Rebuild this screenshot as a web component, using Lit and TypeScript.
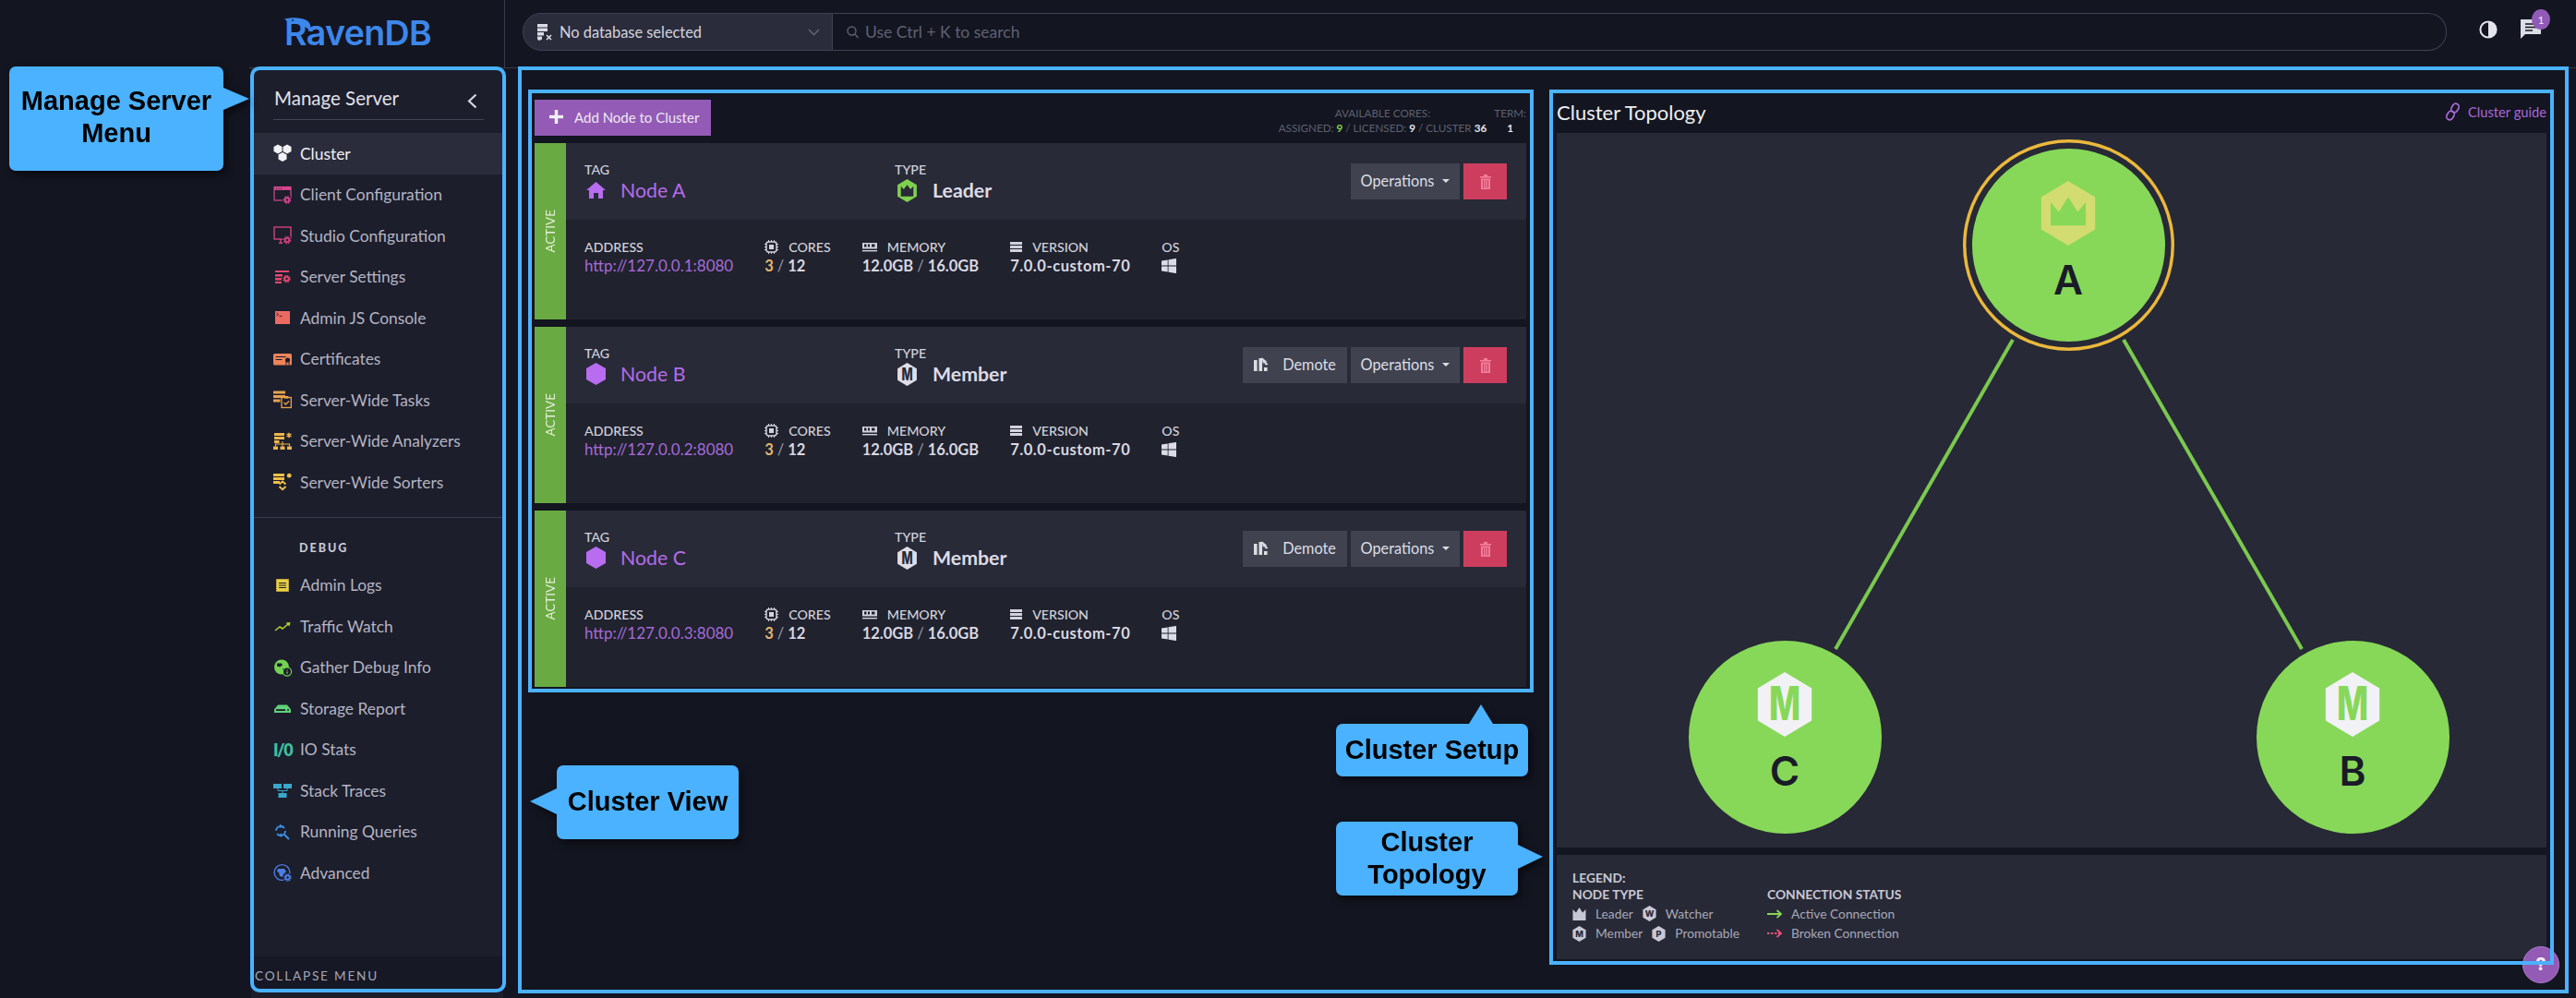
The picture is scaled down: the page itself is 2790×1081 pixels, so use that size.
import { LitElement, html, css, svg } from "lit";
import { customElement } from "lit/decorators.js";

const hexPts = (cx: number, cy: number, rx: number, ry: number) =>
  [[0, -1], [1, -0.5], [1, 0.5], [0, 1], [-1, 0.5], [-1, -0.5]]
    .map(([a, b]) => `${cx + a * rx},${cy + b * ry}`).join(" ");

const gear = (x: number, y: number, c: string, bg = "#1c1e2c") => svg`
  <circle cx=${x} cy=${y} r="5" fill=${bg}/>
  <circle cx=${x} cy=${y} r="2.1" fill="none" stroke=${c} stroke-width="1.7"/>
  <circle cx=${x} cy=${y} r="3.5" fill="none" stroke=${c} stroke-width="1.5" stroke-dasharray="1.7 1"/>`;

const star = (x: number, y: number, c: string) => svg`
  <path d="M${x} ${y - 2.8}V${y + 2.8}M${x - 2.5} ${y - 1.4}L${x + 2.5} ${y + 1.4}M${x - 2.5} ${y + 1.4}L${x + 2.5} ${y - 1.4}" stroke=${c} stroke-width="1.5"/>`;

const icons: Record<string, any> = {
  cluster: svg`<g fill="#f2f2f6"><polygon points=${hexPts(5, 5.5, 4.5, 5)}/><polygon points=${hexPts(15, 5.5, 4.5, 5)}/><polygon points=${hexPts(10, 14, 4.5, 5)}/></g>`,
  client: svg`<rect x="1" y="1.5" width="18" height="14.5" fill="none" stroke="#d8478e" stroke-width="1.2"/><rect x="1" y="1.5" width="18" height="3.4" fill="#d8478e"/><path d="M3 3.2h1M5.5 3.2h1M8 3.2h1" stroke="#1c1e2c" stroke-width="1"/>${gear(15, 15.5, "#d8478e")}`,
  studio: svg`<rect x="1" y="1" width="18" height="13" fill="none" stroke="#d4407f" stroke-width="1.4"/><path d="M8 14v4M6 18.2h4" stroke="#d4407f" stroke-width="1.4"/>${gear(15, 15, "#d4407f")}`,
  settings: svg`<g fill="#e2496f"><rect x="2" y="3" width="15" height="2"/><rect x="2" y="7" width="8" height="2.6"/><rect x="2" y="11" width="7" height="2.6"/><rect x="2" y="15" width="7" height="2"/></g>${gear(14.5, 12, "#e2496f")}`,
  console: svg`<rect x="2" y="3" width="16" height="14" fill="#ea6a62"/><path d="M3.5 5l2 1.6-2 1.6M6.5 8.4h3" fill="none" stroke="#2a1c28" stroke-width=".9"/>`,
  cert: svg`<rect x="0" y="4" width="20" height="12.5" rx="1.6" fill="#ef8458"/><path d="M2.5 7.5h11M2.5 10.5h7" stroke="#1c1e2c" stroke-width="1"/><circle cx="15.5" cy="11" r="2.6" fill="#1c1e2c"/><path d="M14 13v3.5M17 13v3.5" stroke="#1c1e2c" stroke-width="1"/>`,
  tasks: svg`<g fill="#eaa24e"><rect x="0" y="0.5" width="13" height="3"/><rect x="0" y="5" width="13" height="3"/><rect x="0" y="9.5" width="7.5" height="3"/></g><rect x="9" y="7.5" width="10.3" height="11" fill="#1c1e2c" stroke="#eaa24e" stroke-width="1.3"/><rect x="11.8" y="6" width="4.6" height="2.6" fill="#eaa24e"/><path d="M11.5 13l2 2 3.5-3.5" fill="none" stroke="#eaa24e" stroke-width="1.3"/>`,
  analyzers: svg`<g fill="#efb54c"><rect x="1" y="1" width="11" height="3"/><rect x="1" y="5" width="11" height="3"/><rect x="1" y="9" width="5.5" height="3"/><rect x="0" y="15.5" width="5" height="3.5"/><rect x="7.5" y="15.5" width="5" height="3.5"/><rect x="15" y="15.5" width="5" height="3.5"/></g><path d="M10 10v3M2.5 15.5v-2.5h15v2.5M10 13v2.5" fill="none" stroke="#efb54c" stroke-width="1.1"/>${star(17, 3.5, "#efb54c")}`,
  sorters: svg`<g fill="#efc044"><rect x="0" y="1" width="12" height="3"/><rect x="0" y="5" width="12" height="3"/><rect x="0" y="9" width="7" height="3"/><circle cx="17.2" cy="3.2" r="2.4"/></g><path d="M6.5 12.5l3.5-3 3.5 3M6.5 15l3.5 3.2 3.5-3.2" fill="none" stroke="#efc044" stroke-width="2"/>`,
  logs: svg`<rect x="3.5" y="3.5" width="13" height="13" fill="#e8cf45" stroke="#e8cf45" stroke-dasharray="1 .8"/><path d="M6 7.5h8M6 10h8M6 12.5h8" stroke="#1c1e2c" stroke-width="1.2"/>`,
  traffic: svg`<path d="M2 15l5-4 3 2 6-5" fill="none" stroke="#b3cf2f" stroke-width="1.6"/><path d="M13.5 6.5l5-.5-1 4.5z" fill="#b3cf2f"/>`,
  gather: svg`<circle cx="9" cy="9.5" r="8" fill="#74d253"/><path d="M4 5.5h5l1 2-3 2-3-1zM10 11h4l-2 4-2-1z" fill="#1c1e2c"/><circle cx="15" cy="14.5" r="4.6" fill="#1c1e2c" stroke="#74d253" stroke-width="1.2"/><path d="M15 12.5v.9M15 14.5v2.3" stroke="#74d253" stroke-width="1.3"/>`,
  storage: svg`<path d="M1 15v-3.5l4-5h10l4 5V15z" fill="#5fd27a"/><rect x="3" y="11.2" width="10" height="1.8" fill="#1c1e2c"/><circle cx="16" cy="12" r="1" fill="#1c1e2c"/>`,
  stack: svg`<g fill="#38a8cc"><rect x="0" y="3" width="9" height="5"/><rect x="11" y="3" width="9" height="5"/><rect x="5.5" y="13" width="9" height="5"/></g><path d="M5 8v2.5h10V8M10 10.5V13" fill="none" stroke="#38a8cc" stroke-width="1"/>`,
  running: svg`<circle cx="8" cy="9" r="5" fill="none" stroke="#3a90e6" stroke-width="1.9" stroke-dasharray="12 3.5"/><path d="M7 1.5l3.4 2.5L7 6zM9 16l-3.4-2.5L9 11.5z" fill="#3a90e6"/><path d="M12 13l5 5" stroke="#3a90e6" stroke-width="1.9"/>`,
  advanced: svg`<circle cx="9.5" cy="10" r="8.4" fill="none" stroke="#4c7ee2" stroke-width="1.4"/><path d="M5 6h7l2 3-3 3-1 3-3-1-1-4-2-1z" fill="#4c7ee2"/>${gear(15.5, 15.5, "#4c7ee2")}`,
};

const hexIcon = (w: number, h: number, bg: string, inner: any) => html`<svg class="hexi" width=${w} height=${h} viewBox="-10 -12 20 24">
  <polygon points=${hexPts(0, 0, 10, 12)} fill=${bg}/>${inner}</svg>`;

const mText = (fill: string) => svg`<text x="0" y="5.3" transform="scale(.8 1.12)" text-anchor="middle" font-size="15.5" font-weight="800" fill=${fill} font-family="Inter, sans-serif">M</text>`;

const leaderHex = hexIcon(23, 25, "#7ed04d", svg`<polygon points="-6.5,6 -6.5,-4.5 -3.5,-1.4 0,-6 3.5,-1.4 6.5,-4.5 6.5,6" fill="#282a38"/>`);
const memberHex = hexIcon(23, 25, "#dedee8", mText("#282a38"));

const SECTIONS = {
  main: [
    ["cluster", "Cluster", true], ["client", "Client Configuration"], ["studio", "Studio Configuration"],
    ["settings", "Server Settings"], ["console", "Admin JS Console"], ["cert", "Certificates"],
    ["tasks", "Server-Wide Tasks"], ["analyzers", "Server-Wide Analyzers"], ["sorters", "Server-Wide Sorters"],
  ],
  debug: [
    ["logs", "Admin Logs"], ["traffic", "Traffic Watch"], ["gather", "Gather Debug Info"], ["storage", "Storage Report"],
    ["io", "IO Stats"], ["stack", "Stack Traces"], ["running", "Running Queries"], ["advanced", "Advanced"],
  ],
};

const NODES = [
  { tag: "A", addr: "http://127.0.0.1:8080", type: "Leader", demote: false },
  { tag: "B", addr: "http://127.0.0.2:8080", type: "Member", demote: true },
  { tag: "C", addr: "http://127.0.0.3:8080", type: "Member", demote: true },
];

const GRAPH = [
  { tag: "A", x: 554, y: 121.5, leader: true },
  { tag: "C", x: 247, y: 654, leader: false },
  { tag: "B", x: 862, y: 654, leader: false },
];

@customElement("app-root")
export class AppRoot extends LitElement {
  static styles = css`
    :host { display: block; position: relative; width: 2790px; height: 1081px; overflow: hidden; background: #131520; color: #d8d8e4; font-family: Lato, "Noto Sans", sans-serif; }
    * { box-sizing: border-box; }
    svg { display: block; flex: none; overflow: visible; }
    .shell { display: grid; grid-template-columns: 270px 277px 1fr; grid-template-rows: 74px 1fr; height: 100%; }
    .logo { grid-column: 2; border-bottom: 1px solid #383a4a; border-right: 1px solid #383a4a; padding: 17px 0 0 38px; position: relative; }
    .logotext { font: 600 37.5px/38px Inter, sans-serif; color: #3d87ea; letter-spacing: -.6px; }
    .beak { position: absolute; left: 38px; top: 19px; }
    .top { grid-column: 3; border-bottom: 1px solid #383a4a; display: flex; align-items: flex-start; padding: 14px 0 0 19px; }
    .db { width: 336px; height: 41px; background: #2a2c3c; border: 1px solid #3f4152; border-radius: 20px 0 0 20px; display: flex; align-items: center; padding-left: 14px; gap: 7px; font-size: 16.4px; color: #d4d4de; }
    .db .chev { margin-left: auto; margin-right: 13px; }
    .search { width: 1748px; height: 41px; border: 1px solid #3f4152; border-left: 0; border-radius: 0 20px 20px 0; display: flex; align-items: center; gap: 7px; padding-left: 15px; font-size: 17.5px; color: #5f6172; }
    .ticons { display: flex; align-items: center; gap: 25px; margin: 7px 0 0 35px; position: relative; }
    .badge { position: absolute; right: -10px; top: -11px; width: 20px; height: 22px; border-radius: 50%; background: #9159b8; color: #eee; font-size: 12px; display: flex; align-items: center; justify-content: center; }
    .side { grid-column: 2; margin-left: 2px; background: #1c1e2c; border-right: 2px solid #131520; display: flex; flex-direction: column; }
    .shead { height: 56px; margin: 0 21px 0 24px; border-bottom: 1px solid #42445a; display: flex; align-items: center; justify-content: space-between; font-size: 20.5px; color: #e2e2ea; padding: 8px 7px 0 1px; }
    .shead svg { margin-top: 8px; }
    .menu { margin-top: 14px; }
    .item { height: 44.5px; display: flex; align-items: center; padding-left: 24px; gap: 9px; font-size: 17.4px; color: #b4b4c2; }
    .item.on { background: #2a2c3c; color: #f0f0f4; }
    .item .ic { width: 20px; height: 20px; flex: none; }
    .iotxt { width: 20px; font-weight: 800; font-size: 18px; color: #3fbf9f; letter-spacing: -1.5px; text-align: center; line-height: 20px; }
    .sep { border-top: 1px solid #3a3c4e; margin-top: 15.5px; }
    .dbg { height: 50.5px; padding: 25px 0 0 52px; font-size: 12.5px; font-weight: 900; letter-spacing: 2px; color: #c8c8d4; }
    .collapse { margin-top: auto; height: 37px; background: #161825; padding: 13px 0 0 4px; font-size: 13.6px; letter-spacing: 1.8px; color: #a6a6b4; white-space: nowrap; margin-bottom: 8px; }
    .main { grid-column: 3; display: flex; gap: 33px; padding: 34px 32px 0; }
    .setup { width: 1074px; display: flex; flex-direction: column; gap: 8px; }
    .shdr { height: 39px; display: flex; justify-content: space-between; }
    .add { width: 191px; background: #935bb5; color: #f0e8f4; display: flex; align-items: center; gap: 12px; padding: 0 0 2px 16px; font-size: 15px; white-space: nowrap; }
    .stats { display: flex; gap: 8px; font-size: 11.7px; line-height: 16px; color: #5e6070; text-align: center; padding-top: 6px; }
    .stats b { color: #e6e6ee; font-weight: 700; }
    .stats b.g { color: #85d555; }
    .card { height: 191px; display: flex; }
    .state { width: 34px; background: #6aaa42; display: flex; align-items: center; justify-content: center; }
    .state span { writing-mode: vertical-rl; transform: rotate(180deg); font-size: 13.5px; color: #e4eed8; }
    .body { flex: 1; display: flex; flex-direction: column; }
    .upper { height: 83px; background: #282a38; display: flex; padding: 20px 21px 0 20px; position: relative; }
    .lower { flex: 1; background: #20222e; display: flex; gap: 34px; padding: 21px 0 0 20px; }
    .tagc { width: 336px; }
    .lbl { font-size: 14.2px; line-height: 17px; color: #d2d2dc; font-weight: 500; white-space: nowrap; display: flex; align-items: center; gap: 11px; }
    .val { display: flex; align-items: center; gap: 16px; height: 28px; font-size: 21.3px; padding-left: 2px; }
    .val.name { color: #b46ce8; }
    .val.kind { color: #dcdce6; font-weight: 700; }
    .sub { height: 25px; margin-top: -1px; display: flex; align-items: center; font-size: 16.5px; font-weight: 700; color: #d8d8e2; white-space: nowrap; }
    .sub.link { color: #a56ad8; font-weight: 400; font-size: 17px; }
    .sub.ver { letter-spacing: .55px; }
    .sub i { font-style: normal; color: #e6b46c; }
    .sub em { font-style: normal; font-weight: 400; color: #9a9aa8; margin: 0 4px; }
    .acts { margin-left: auto; margin-top: 2px; display: flex; gap: 4px; height: 39px; }
    .btn { height: 39px; padding-bottom: 2px; background: #40424f; color: #dcdce4; font-size: 16.3px; display: flex; align-items: center; justify-content: center; gap: 9px; }
    .btn.ops { width: 118px; }
    .btn.dem { width: 113px; gap: 15px; }
    .btn.del { width: 47px; background: #cd3e5e; padding-bottom: 0; }
    .caret { width: 0; height: 0; border: 4px solid transparent; border-top: 4.5px solid #dcdce4; border-bottom: 0; }
    .topo { flex: 1; display: flex; flex-direction: column; }
    .thdr { height: 36px; padding-bottom: 10px; display: flex; align-items: center; justify-content: space-between; font-size: 22px; color: #eeeef2; }
    .guide { display: flex; align-items: center; gap: 9px; font-size: 14.7px; color: #a968d8; }
    .canvas { height: 774px; background: #272936; position: relative; }
    .lines { position: absolute; inset: 0; }
    .node { position: absolute; width: 209px; height: 209px; margin: -104.5px 0 0 -104.5px; border-radius: 50%; background: #87d858; display: flex; flex-direction: column; align-items: center; padding-top: 34.5px; }
    .node.lead { box-shadow: 0 0 0 6.5px #272936, 0 0 0 10px #eab83c; }
    .letter { margin-top: 9px; font: 600 44px/56px Inter, sans-serif; color: #1a1b28; }
    .legend { margin-top: 8px; height: 113px; background: #272936; padding: 16px 0 0 17px; font-size: 13.8px; line-height: 18px; color: #a8a8b8; display: flex; flex-direction: column; }
    .legend h4 { margin: 0; font-size: 13.8px; font-weight: 700; color: #c8c8d4; }
    .lcols { display: flex; gap: 34px; }
    .lcol.types { width: 177px; }
    .lcol h4 { margin-bottom: 1px; }
    .lrow { display: flex; align-items: center; height: 21.5px; gap: 10px; white-space: nowrap; }
    .help { position: absolute; left: 2732px; top: 1025px; width: 40px; height: 40px; border-radius: 50%; background: #935bb5; border: 1px solid #b07ad0; color: #f4ecf8; font: 800 19px/38px Inter, sans-serif; text-align: center; }
    .frame { position: absolute; border: 4px solid #4ab2ff; pointer-events: none; }
    .f-menu { left: 271px; top: 72px; width: 277px; height: 1003px; border-radius: 10px; }
    .f-main { left: 561px; top: 72px; width: 2221px; height: 1004px; }
    .f-setup { left: 572px; top: 97px; width: 1089px; height: 653px; }
    .f-topo { left: 1678px; top: 97px; width: 1088px; height: 948px; }
    .call { position: absolute; background: #4ab2ff; color: #000; border-radius: 7px; font: 700 29px/35px "Liberation Sans", Arial, sans-serif; text-align: center; filter: drop-shadow(3px 4px 4px rgba(0,0,0,.55)); }
    .call::after { content: ""; position: absolute; width: 0; height: 0; border: solid transparent; }
    .c-menu { left: 10px; top: 72px; width: 232px; height: 113px; padding-top: 20px; }
    .c-menu::after { left: 100%; top: 23px; border-width: 12.5px 0 12.5px 28px; border-left-color: #4ab2ff; }
    .c-view { left: 603px; top: 829px; width: 197px; height: 80px; padding-top: 22px; }
    .c-view::after { right: 100%; top: 25px; border-width: 14px 29px 14px 0; border-right-color: #4ab2ff; }
    .c-setup { left: 1447px; top: 784px; width: 208px; height: 57px; padding-top: 11px; }
    .c-setup::after { left: 144px; bottom: 100%; border-width: 0 13px 21px; border-bottom-color: #4ab2ff; }
    .c-topo { left: 1447px; top: 890px; width: 197px; height: 80px; padding-top: 5px; }
    .c-topo::after { left: 100%; top: 25px; border-width: 13px 0 13px 27px; border-left-color: #4ab2ff; }
  `;

  private menuItem(m: any[]) {
    const [k, label, on] = m;
    return html`<div class="item ${on ? "on" : ""}">
      ${k === "io" ? html`<span class="iotxt">I/0</span>` : html`<svg class="ic" viewBox="0 0 20 20">${icons[k]}</svg>`}
      <span>${label}</span></div>`;
  }

  private card(n: typeof NODES[number]) {
    const lead = n.tag === "A";
    return html`<div class="card">
      <div class="state"><span>ACTIVE</span></div>
      <div class="body">
        <div class="upper">
          <div class="tagc">
            <div class="lbl">TAG</div>
            <div class="val name">
              ${lead
                ? html`<svg width="21" height="18" viewBox="0 0 21 18"><path d="M10.5 0L21 9h-3v9h-5v-6H8v6H3V9H0z" fill="#b86cf0"/></svg>`
                : html`<svg width="21" height="24" viewBox="0 0 21 24"><polygon points=${hexPts(10.5, 12, 10.5, 12)} fill="#b86cf0"/></svg>`}
              <span>Node ${n.tag}</span>
            </div>
          </div>
          <div>
            <div class="lbl">TYPE</div>
            <div class="val kind">${lead ? leaderHex : memberHex}<span>${n.type}</span></div>
          </div>
          <div class="acts">
            ${n.demote ? html`<div class="btn dem">
              <svg width="16" height="15" viewBox="0 0 16 15" fill="#dcdce4"><rect x="0" y="3" width="3.6" height="12"/><rect x="5.5" y="1" width="3.6" height="14"/><rect x="11" y="11" width="3.6" height="4"/><path d="M8.5 0l6 5-1.6-.2 2.6 3L13 8.5 10.8 5.6 10 7z"/></svg>
              <span>Demote</span></div>` : ""}
            <div class="btn ops"><span>Operations</span><span class="caret"></span></div>
            <div class="btn del"><svg width="12" height="16" viewBox="0 0 12 16" fill="#f27f9a"><rect x="0" y="2" width="12" height="1.6"/><rect x="4" y="0" width="4" height="2"/><path d="M1 4.5h10V16H1zM3 6v8.5h1V6zM5.5 6v8.5h1V6zM8 6v8.5h1V6z" fill-rule="evenodd"/></svg></div>
          </div>
        </div>
        <div class="lower">
          <div><div class="lbl">ADDRESS</div><div class="sub link">${n.addr}</div></div>
          <div><div class="lbl">
            <svg width="15" height="15" viewBox="0 0 15 15" fill="none" stroke="#d2d2dc"><rect x="2" y="2" width="11" height="11" rx="2.4" stroke-width="1.5"/><rect x="5" y="5" width="5" height="5" fill="#d2d2dc" stroke="none"/><path d="M4.5 0v2M7.5 0v2M10.5 0v2M4.5 13v2M7.5 13v2M10.5 13v2M0 4.5h2M0 7.5h2M0 10.5h2M13 4.5h2M13 7.5h2M13 10.5h2"/></svg>
            CORES</div><div class="sub"><i>3</i><em>/</em>12</div></div>
          <div><div class="lbl">
            <svg width="16" height="10" viewBox="0 0 16 10" fill="#d2d2dc"><path d="M0 0h16v6.5H0zM2 1.5v3h2.5v-3zM6 1.5v3h2v-3zM10 1.5v3h3.5v-3z" fill-rule="evenodd"/><rect x="0" y="8" width="16" height="1.4"/></svg>
            MEMORY</div><div class="sub">12.0GB<em>/</em>16.0GB</div></div>
          <div><div class="lbl">
            <svg width="13" height="11" viewBox="0 0 13 11" fill="#d2d2dc"><rect width="13" height="3"/><rect y="4" width="13" height="3"/><rect y="8" width="13" height="3"/></svg>
            VERSION</div><div class="sub ver">7.0.0-custom-70</div></div>
          <div><div class="lbl">OS</div><div class="sub"><svg width="16" height="16" viewBox="0 0 16 16" fill="#dcdce6"><path d="M0 2.4L6.7 1.4V7.6H0zM7.5 1.3L16 0V7.6H7.5zM0 8.4H6.7V14.6L0 13.6zM7.5 8.4H16V16L7.5 14.7z"/></svg></div></div>
        </div>
      </div>
    </div>`;
  }

  private legendHex(letter: string) {
    return hexIcon(15, 17, "#c8c8d4", svg`<text x="0" y="5" text-anchor="middle" font-size="13" font-weight="800" fill="#272936" font-family="Inter, sans-serif">${letter}</text>`);
  }

  render() {
    return html`
      <div class="shell">
        <div class="logo">
          <span class="logotext">RavenDB</span>
          <svg class="beak" width="30" height="16" viewBox="0 0 30 16"><path d="M0 1.5C8-.5 18-.5 24 3c4 2.5 5 6 4 11L21 9C17 6 9 4.5 4 5z" fill="#3d87ea"/><circle cx="9" cy="3" r=".9" fill="#131520"/></svg>
        </div>
        <div class="top">
          <div class="db">
            <svg width="18" height="18" viewBox="0 0 18 18" fill="#dcdce6"><path d="M1 0h11v3.5H1zM1 4.5h11V8H1zM1 9h7v3.5H1zM1 13.5h5v3L3 18l-2-1.5z"/><path d="M11 12l5 5M16 12l-5 5" stroke="#dcdce6" stroke-width="1.6"/></svg>
            <span>No database selected</span>
            <svg class="chev" width="13" height="8" viewBox="0 0 13 8" fill="none" stroke="#5f6172" stroke-width="1.6"><path d="M1 1l5.5 5.5L12 1"/></svg>
          </div>
          <div class="search">
            <svg width="13" height="14" viewBox="0 0 13 14" fill="none" stroke="#5f6172" stroke-width="1.4"><circle cx="5.5" cy="5.5" r="4.5"/><path d="M9 9l3.5 4"/></svg>
            <span>Use Ctrl + K to search</span>
          </div>
          <div class="ticons">
            <svg width="20" height="20" viewBox="0 0 20 20"><circle cx="10" cy="10" r="8.6" fill="none" stroke="#e4e4ec" stroke-width="2"/><path d="M10 1.4a8.6 8.6 0 0 1 0 17.2z" fill="#e4e4ec"/></svg>
            <svg width="22" height="22" viewBox="0 0 22 22"><path d="M0 0h22v16H5l-5 5z" fill="#dcdce6"/><path d="M5 5h12M5 8.5h12M5 12h8" stroke="#131520" stroke-width="1.6"/></svg>
            <span class="badge">1</span>
          </div>
        </div>
        <aside class="side">
          <div class="shead"><span>Manage Server</span>
            <svg width="11" height="17" viewBox="0 0 11 17" fill="none" stroke="#d8d8e0" stroke-width="2.2"><path d="M9.5 1.5L2 8.5l7.5 7"/></svg>
          </div>
          <div class="menu">${SECTIONS.main.map((m) => this.menuItem(m))}</div>
          <div class="sep"></div>
          <div class="dbg">DEBUG</div>
          <div>${SECTIONS.debug.map((m) => this.menuItem(m))}</div>
          <div class="collapse">COLLAPSE MENU</div>
        </aside>
        <main class="main">
          <section class="setup">
            <div class="shdr">
              <div class="add">
                <svg width="15" height="15" viewBox="0 0 15 15" fill="#f4f0f6"><rect x="5.8" width="3.4" height="15"/><rect y="5.8" width="15" height="3.4"/></svg>
                <span>Add Node to Cluster</span>
              </div>
              <div class="stats">
                <div>AVAILABLE CORES:<br/>ASSIGNED: <b class="g">9</b> / LICENSED: <b>9</b> / CLUSTER <b>36</b></div>
                <div>TERM:<br/><b>1</b></div>
              </div>
            </div>
            ${NODES.map((n) => this.card(n))}
          </section>
          <section class="topo">
            <div class="thdr"><span>Cluster Topology</span>
              <span class="guide"><svg width="15" height="20" viewBox="0 0 15 20" fill="none" stroke="#a968d8" stroke-width="1.7"><rect x="6.5" y="1" width="7" height="10" rx="3.5" transform="rotate(30 10 6)"/><rect x="1.5" y="9" width="7" height="10" rx="3.5" transform="rotate(30 5 14)"/></svg>Cluster guide</span>
            </div>
            <div class="canvas">
              <svg class="lines" width="1072" height="774" viewBox="0 0 1072 774" stroke="#7bc94f" stroke-width="4">
                <line x1="494" y1="224" x2="302" y2="559"/>
                <line x1="614" y1="224" x2="807" y2="559"/>
              </svg>
              ${GRAPH.map((g) => html`<div class="node ${g.leader ? "lead" : ""}" style="left:${g.x}px;top:${g.y}px">
                ${g.leader
                  ? hexIcon(60, 70, "#d2dc70", svg`<polygon points="-6.5,4.5 -6.5,-4 -3.5,-.5 0,-6 3.5,-.5 6.5,-4 6.5,4.5" fill="#87d858"/>`)
                  : hexIcon(60, 70, "#f1f1f6", mText("#87d858"))}
                <span class="letter">${g.tag}</span>
              </div>`)}
            </div>
            <div class="legend">
              <h4>LEGEND:</h4>
              <div class="lcols">
                <div class="lcol types">
                  <h4>NODE TYPE</h4>
                  <div class="lrow"><svg width="15" height="14" viewBox="-7.5 -7 15 14"><polygon points="-7,7 -7,-5 -3.5,-1.5 0,-7 3.5,-1.5 7,-5 7,7" fill="#c8c8d4"/></svg><span>Leader</span>${this.legendHex("W")}<span>Watcher</span></div>
                  <div class="lrow">${this.legendHex("M")}<span>Member</span>${this.legendHex("P")}<span>Promotable</span></div>
                </div>
                <div class="lcol">
                  <h4>CONNECTION STATUS</h4>
                  <div class="lrow"><svg width="16" height="10" viewBox="0 0 16 10" fill="none" stroke="#85d555" stroke-width="1.8"><path d="M0 5h15M10.5 1l4.5 4-4.5 4"/></svg><span>Active Connection</span></div>
                  <div class="lrow"><svg width="16" height="10" viewBox="0 0 16 10" fill="none" stroke="#e8507a" stroke-width="1.8"><path d="M0 5h15" stroke-dasharray="2.5 1.5"/><path d="M10.5 1l4.5 4-4.5 4"/></svg><span>Broken Connection</span></div>
                </div>
              </div>
            </div>
          </section>
        </main>
      </div>
      <div class="help">?</div>
      <div class="frame f-menu"></div>
      <div class="frame f-main"></div>
      <div class="frame f-setup"></div>
      <div class="frame f-topo"></div>
      <div class="call c-menu">Manage Server<br/>Menu</div>
      <div class="call c-view">Cluster View</div>
      <div class="call c-setup">Cluster Setup</div>
      <div class="call c-topo">Cluster<br/>Topology</div>
    `;
  }
}
